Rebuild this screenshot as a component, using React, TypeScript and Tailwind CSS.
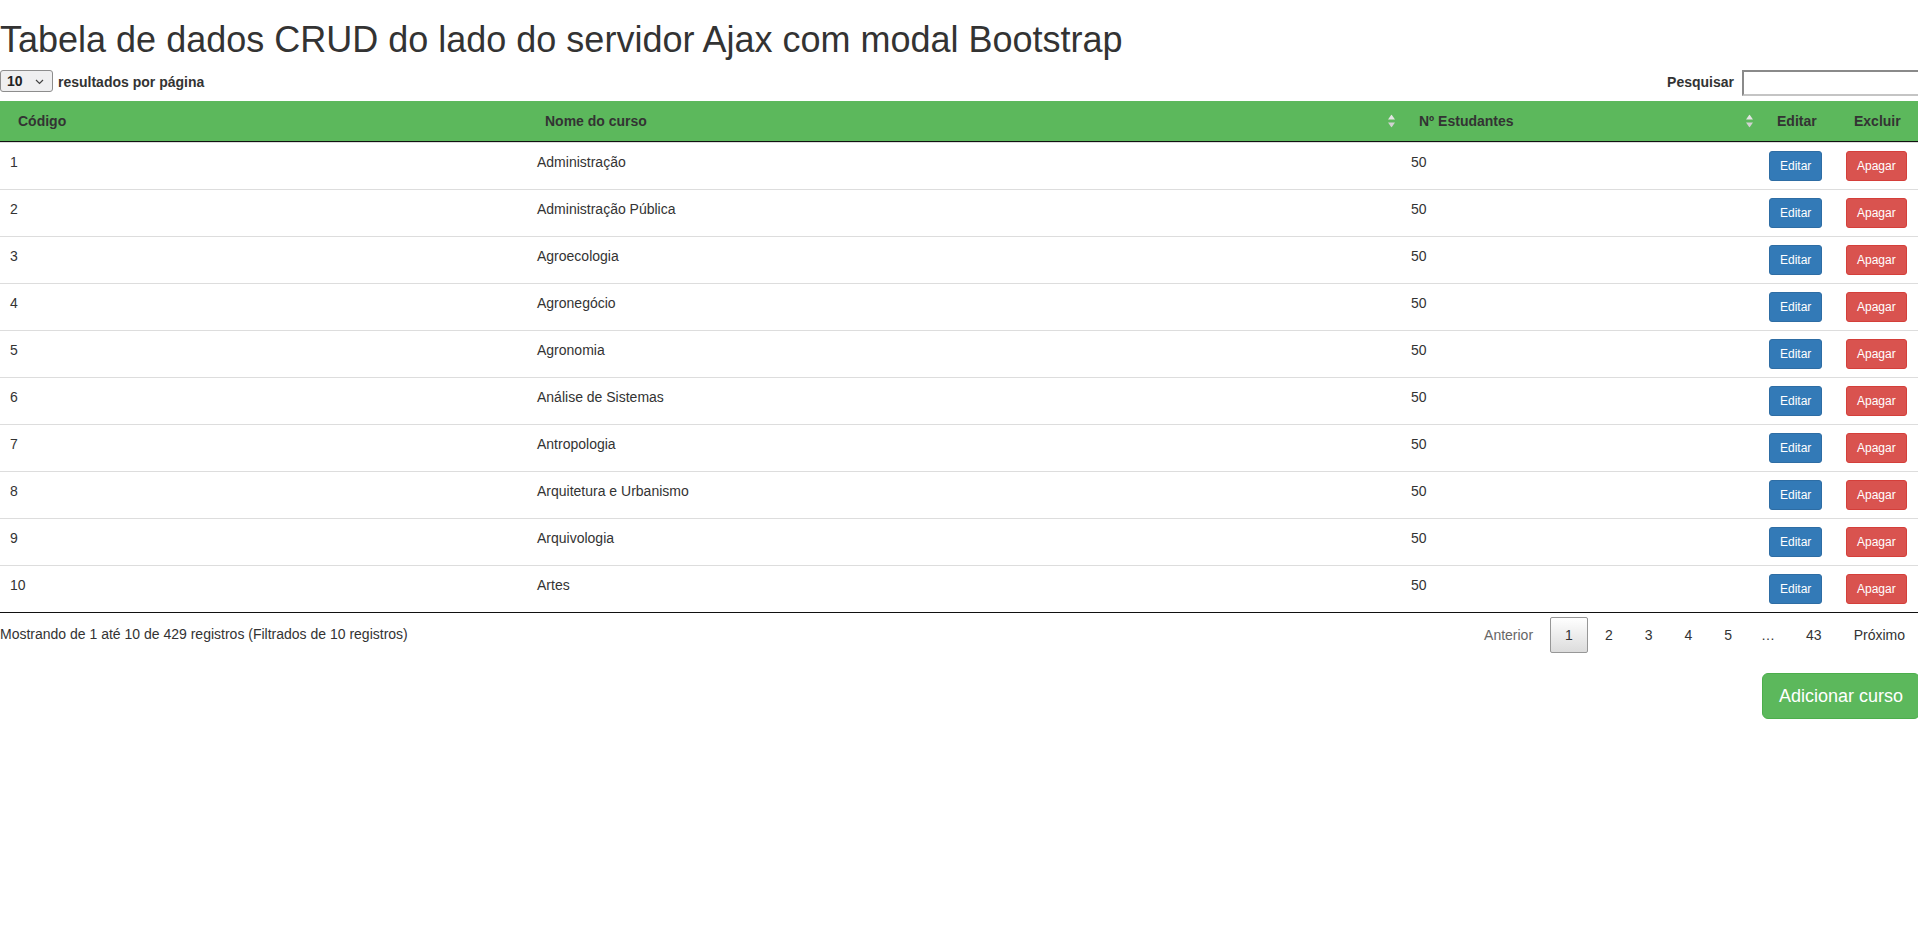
import React from "react";

const cursos = [
  "Administração",
  "Administração Pública",
  "Agroecologia",
  "Agronegócio",
  "Agronomia",
  "Análise de Sistemas",
  "Antropologia",
  "Arquitetura e Urbanismo",
  "Arquivologia",
  "Artes",
];

function SortIcon() {
  return (
    <svg
      width="7"
      height="13"
      viewBox="0 0 7 13"
      className="absolute right-[6px] top-1/2 -translate-y-1/2"
    >
      <polygon points="3.5,0 7,5 0,5" fill="#e4e4e4" />
      <polygon points="0,8 7,8 3.5,13" fill="#d2d2d2" />
    </svg>
  );
}

function PageButton({
  label,
  current,
  disabled,
}: {
  label: string;
  current?: boolean;
  disabled?: boolean;
}) {
  return (
    <a
      className={`ml-[2px] inline-block rounded-[2px] border px-[14px] py-[7px] text-center leading-[20px] ${
        current
          ? "border-[#979797] bg-gradient-to-b from-white to-[#dcdcdc] text-[#333]"
          : "border-transparent"
      } ${disabled ? "text-[#666]" : "text-[#333]"}`}
    >
      {label}
    </a>
  );
}

export default function App() {
  return (
    <div
      className="w-full overflow-hidden bg-white text-[14px] text-[#333]"
      style={{ fontFamily: '"Liberation Sans", Arial, Helvetica, sans-serif' }}
    >
      <div className="w-[1920px]">
        <h1 className="mt-[20px] mb-[10px] text-[36px] font-normal leading-[1.1] text-[#333]">
          Tabela de dados CRUD do lado do servidor Ajax com modal Bootstrap
        </h1>

        {/* Length + search */}
        <div className="flex h-[26px] items-start justify-between">
          <div className="flex h-[22px] items-center">
            <div className="relative h-[22px] w-[53px] rounded-[3px] border border-[#8d8d8d] bg-[#efeff0]">
              <span className="absolute left-[6px] top-[1px] text-[14px] font-bold leading-[18px] text-[#222]">
                10
              </span>
              <svg
                width="9"
                height="6"
                viewBox="0 0 9 6"
                className="absolute right-[8px] top-[8px]"
              >
                <polyline
                  points="1,1 4.5,4.5 8,1"
                  fill="none"
                  stroke="#444"
                  strokeWidth="1.2"
                />
              </svg>
            </div>
            <span className="ml-[5px] mt-[3px] font-bold text-[#333]">
              resultados por página
            </span>
          </div>
          <div className="-mr-[22px] flex h-[26px] items-center">
            <span className="mr-[8px] font-bold text-[#333]">Pesquisar</span>
            <input
              type="text"
              className="h-[26px] w-[200px] border-2 border-t-[#8a8a8a] border-l-[#8a8a8a] border-b-[#c4c4c4] border-r-[#c4c4c4] bg-white outline-none"
            />
          </div>
        </div>

        {/* Table */}
        <table className="mt-[5px] w-[1920px] table-fixed border-separate border-spacing-0">
          <colgroup>
            <col className="w-[527px]" />
            <col className="w-[874px]" />
            <col className="w-[358px]" />
            <col className="w-[77px]" />
            <col className="w-[84px]" />
          </colgroup>
          <thead>
            <tr className="bg-[#5cb85c]">
              <th className="border-b border-[#111] px-[18px] py-[10px] text-left font-bold leading-[20px]">
                Código
              </th>
              <th className="relative border-b border-[#111] px-[18px] py-[10px] text-left font-bold leading-[20px]">
                Nome do curso
                <SortIcon />
              </th>
              <th className="relative border-b border-[#111] px-[18px] py-[10px] text-left font-bold leading-[20px]">
                Nº Estudantes
                <SortIcon />
              </th>
              <th className="border-b border-[#111] px-[18px] py-[10px] text-left font-bold leading-[20px]">
                Editar
              </th>
              <th className="border-b border-[#111] px-[18px] py-[10px] text-left font-bold leading-[20px]">
                Excluir
              </th>
            </tr>
          </thead>
          <tbody>
            {cursos.map((nome, i) => {
              const last = i === cursos.length - 1;
              const base = `border-t border-[#ddd] ${
                last ? "border-b border-b-[#111]" : ""
              } px-[10px] align-top leading-[20px]`;
              const txt = `${base} pt-[9px] pb-[8px]`;
              const btn = `${base} py-[8px]`;
              return (
                <tr key={nome}>
                  <td className={txt}>{i + 1}</td>
                  <td className={txt}>{nome}</td>
                  <td className={txt}>50</td>
                  <td className={btn}>
                    <button className="block rounded-[3px] border border-[#2e6da4] bg-[#337ab7] px-[10px] py-[5px] text-[12px] leading-[18px] text-white">
                      Editar
                    </button>
                  </td>
                  <td className={btn}>
                    <button className="block rounded-[3px] border border-[#d43f3a] bg-[#d9534f] px-[10px] py-[5px] text-[12px] leading-[18px] text-white">
                      Apagar
                    </button>
                  </td>
                </tr>
              );
            })}
          </tbody>
        </table>

        {/* Footer */}
        <div className="flex items-start justify-between">
          <div className="pt-[11.5px] leading-[20px]">
            Mostrando de 1 até 10 de 429 registros (Filtrados de 10 registros)
          </div>
          <div className="flex items-center pt-[4px]">
            <PageButton label="Anterior" disabled />
            <PageButton label="1" current />
            <PageButton label="2" />
            <PageButton label="3" />
            <PageButton label="4" />
            <PageButton label="5" />
            <span className="px-[14px] leading-[20px] text-[#333]">…</span>
            <PageButton label="43" />
            <PageButton label="Próximo" />
          </div>
        </div>

        <div className="mt-[20px] flex justify-end">
          <button className="rounded-[6px] border border-[#4cae4c] bg-[#5cb85c] px-[16px] py-[10px] text-[18px] leading-[24px] text-white">
            Adicionar curso
          </button>
        </div>
      </div>
    </div>
  );
}
